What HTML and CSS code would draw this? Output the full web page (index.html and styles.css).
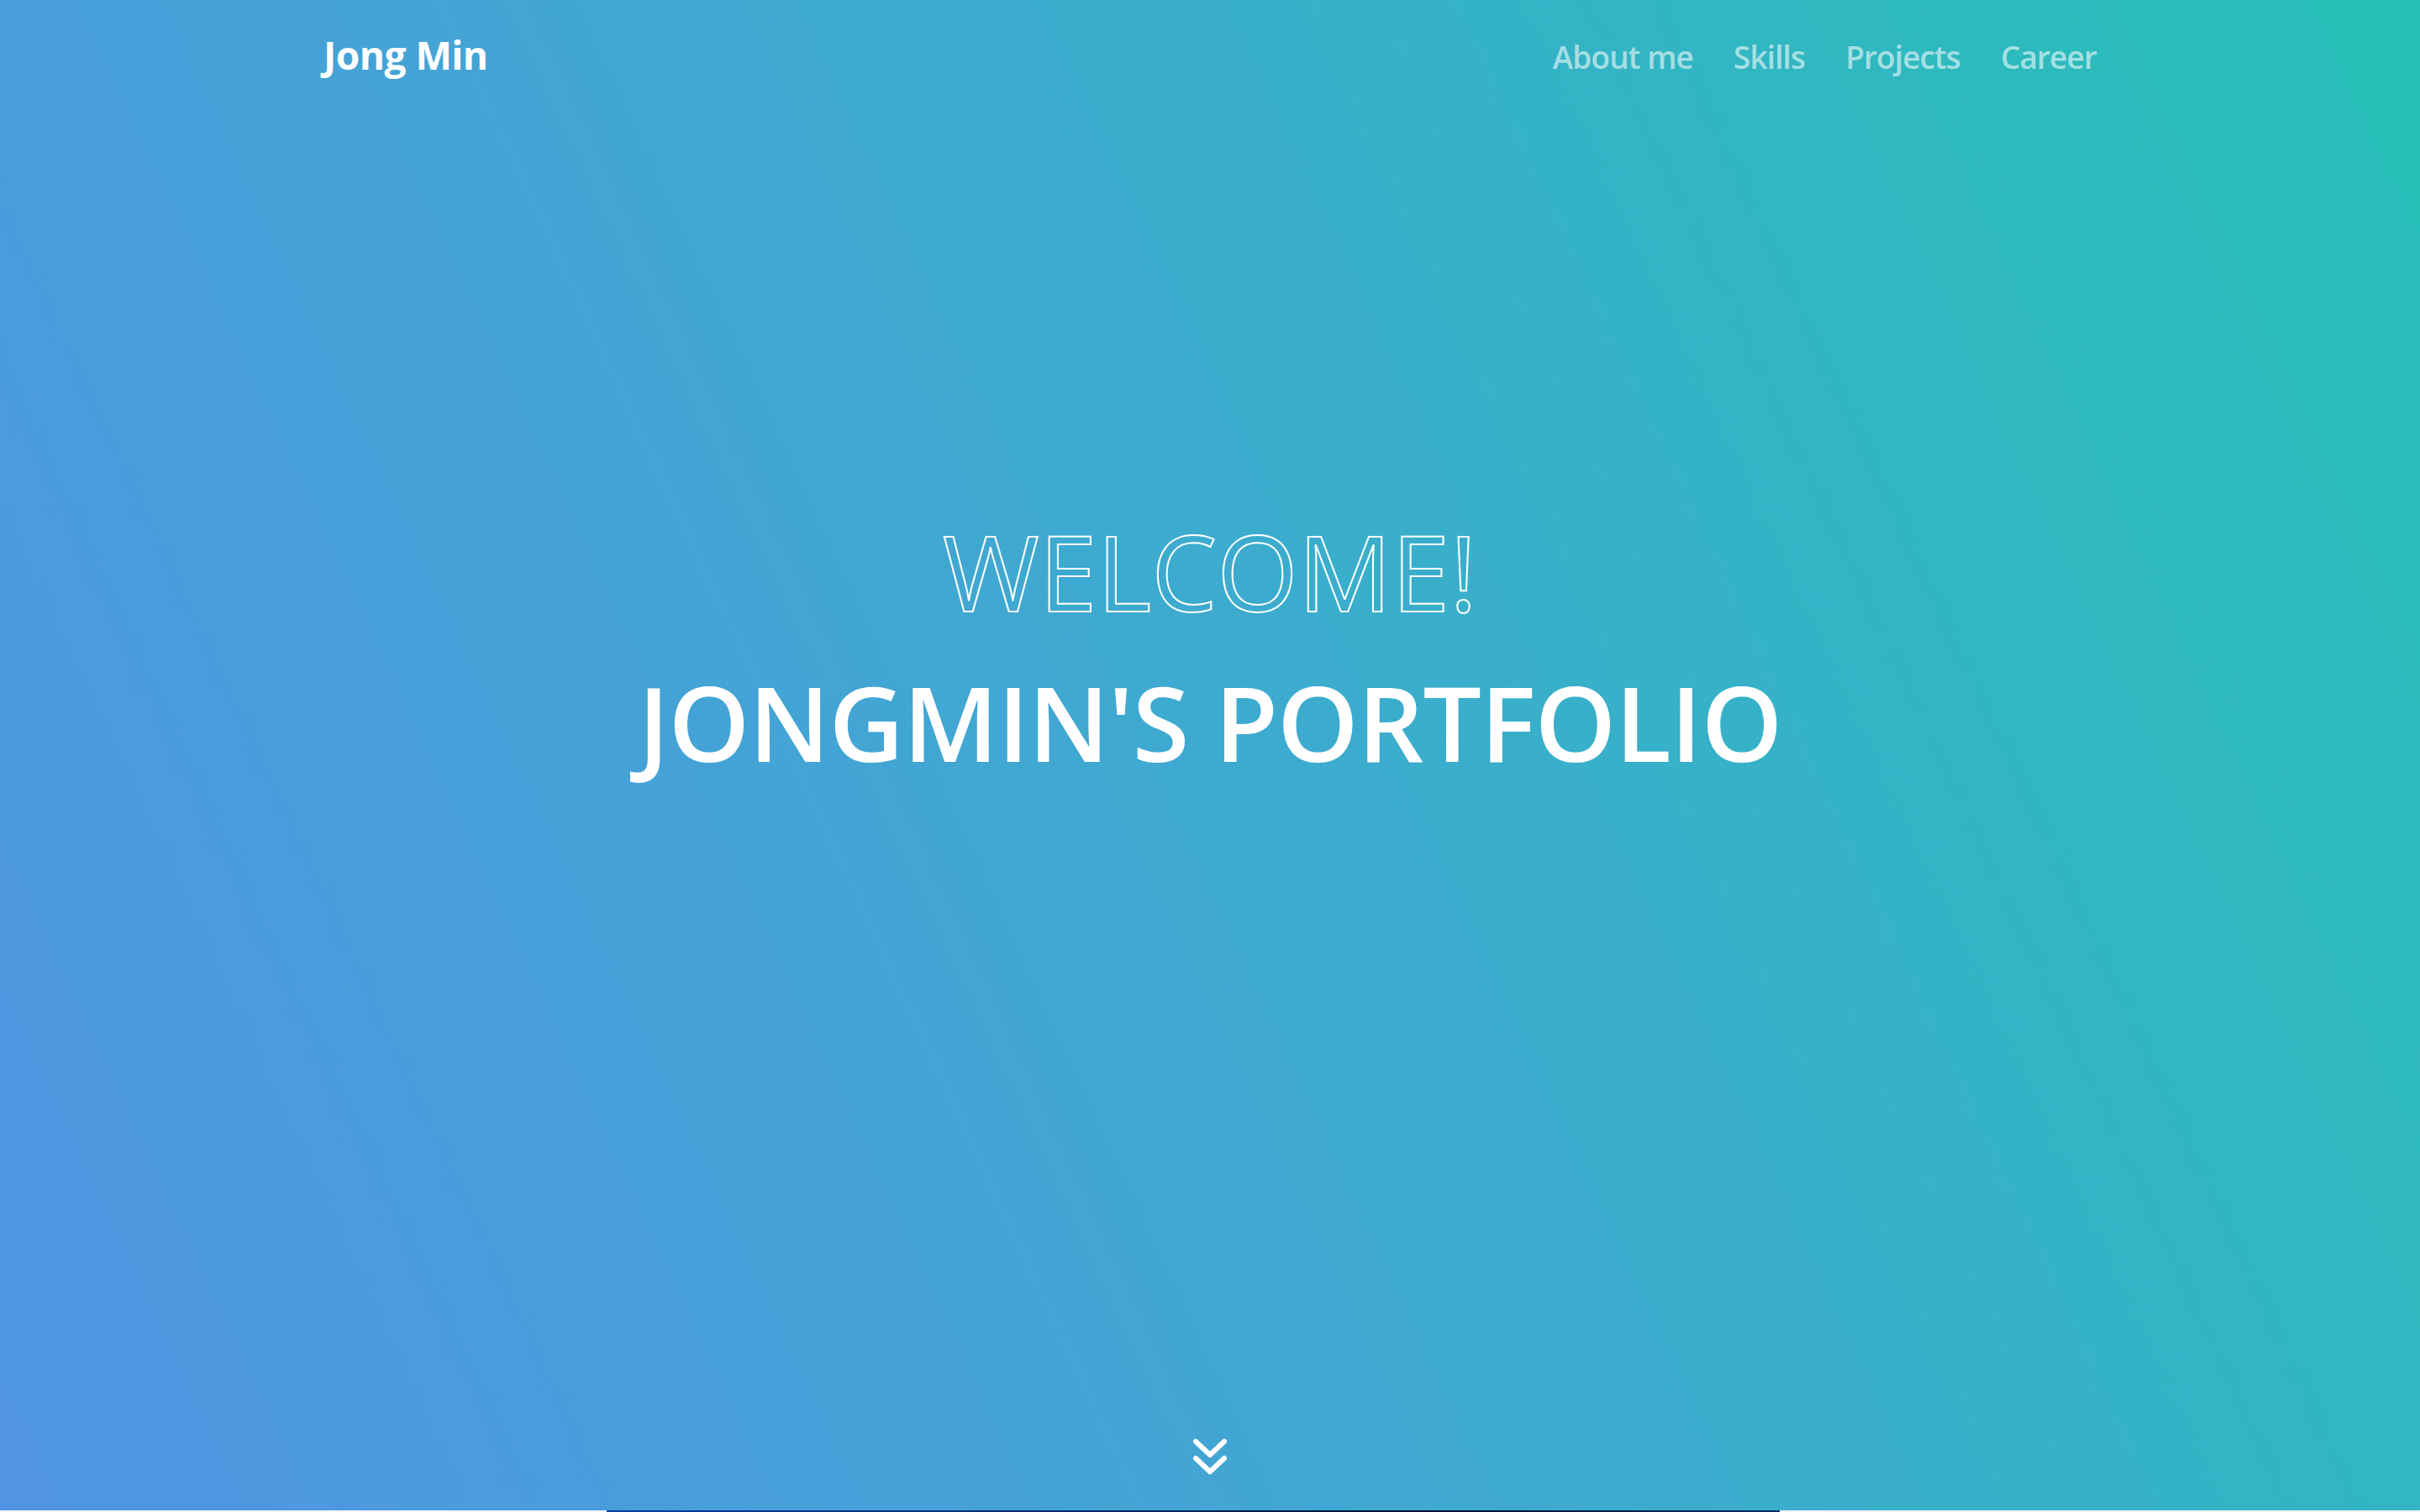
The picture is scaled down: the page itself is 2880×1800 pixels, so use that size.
FILE: index.html
```html
<!DOCTYPE html>
<html lang="ko">
<head>
<meta charset="utf-8">
<title>Jong Min</title>
<link rel="stylesheet" href="styles.css">
</head>
<body>
<section class="hero">
  <header class="topbar">
    <a class="logo" href="#">Jong Min</a>
    <nav class="menu">
      <a href="#about">About me</a>
      <a href="#skills">Skills</a>
      <a href="#projects">Projects</a>
      <a href="#career">Career</a>
    </nav>
  </header>
  <div class="intro">
    <p class="welcome">WELCOME!</p>
    <h1 class="title">JONGMIN'S PORTFOLIO</h1>
  </div>
  <a class="scroll" href="#about" aria-label="scroll down">
    <svg width="42" height="46" viewBox="0 0 42 46" fill="none" stroke="#fff" stroke-width="6" stroke-linecap="round" stroke-linejoin="round">
      <polyline points="4,4 21,20 38,4"/>
      <polyline points="4,24 21,40 38,24"/>
    </svg>
  </a>
</section>
<section class="next" id="about">
  <div class="shot"></div>
</section>
</body>
</html>
```
FILE: styles.css
```css
* { box-sizing: border-box; }
html, body { margin: 0; padding: 0; }
body {
  font-family: "Open Sans", "Noto Sans", "Noto Sans CJK KR", sans-serif;
  color: #fff;
}
a { color: inherit; text-decoration: none; }

.hero {
  height: 1798px;
  display: flex;
  flex-direction: column;
  background: linear-gradient(65deg, #5194e3 0%, #3eaad0 50%, #27c0b7 100%);
}

.topbar {
  width: 2110px;
  margin: 0 auto;
  padding-top: 42px;
  display: flex;
  justify-content: space-between;
  align-items: flex-start;
}
.logo {
  font-size: 46px;
  line-height: 1;
  font-weight: 700;
  letter-spacing: -0.5px;
  color: #fff;
}
.menu {
  display: flex;
  gap: 48px;
  margin-top: 7px;
}
.menu a {
  font-size: 37px;
  line-height: 1;
  font-weight: 600;
  letter-spacing: -0.9px;
  color: rgba(255, 255, 255, 0.58);
}

.intro {
  margin-top: 530px;
  display: flex;
  flex-direction: column;
  align-items: center;
}
.welcome {
  margin: 0;
  font-size: 124px;
  line-height: 1;
  font-weight: 400;
  color: transparent;
  -webkit-text-stroke: 2px #fff;
}
.title {
  margin: 56px 0 0;
  font-size: 123px;
  line-height: 1;
  font-weight: 600;
  letter-spacing: -1px;
  color: #fff;
}

.scroll {
  margin: auto auto 0;
  padding-bottom: 40px;
  display: block;
  line-height: 0;
}

.next {
  background: #eef3f8;
  height: 400px;
  display: flex;
  padding-left: 722px;
}
.shot {
  width: 1396px;
  height: 300px;
  background: linear-gradient(90deg, #0a3fa0, #062a6e 40%, #03122e 70%, #0a2c6a);
}
```
